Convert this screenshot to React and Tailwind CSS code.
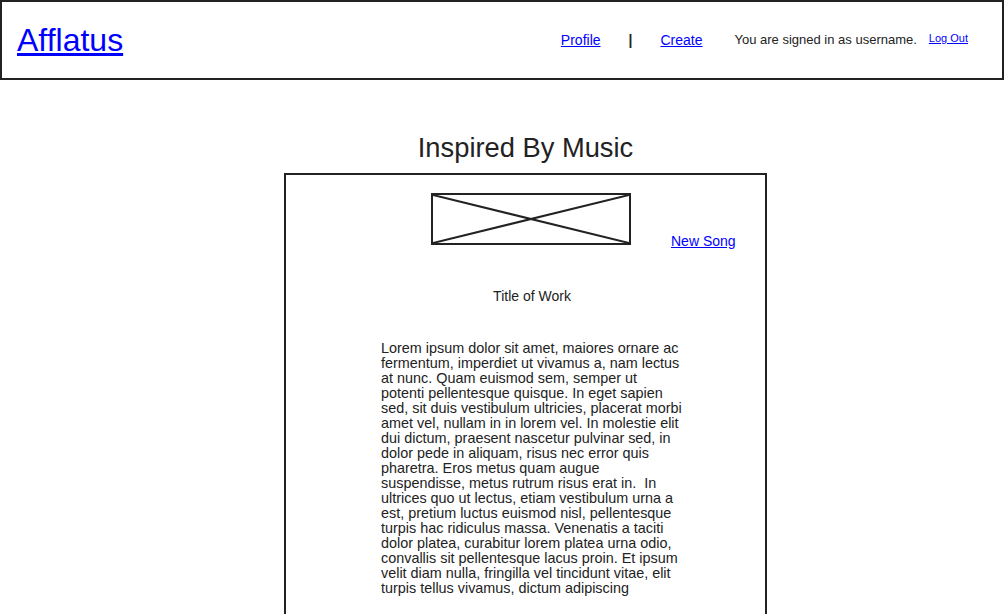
// Afflatus wireframe page
// Header with nav, then a centred card for the work

const Header = () => {
  return (
    <header className="h-[80px] border-2 border-[#222] flex items-center pl-[15px] pr-[34px]">
      <a href="#" className="text-[32px] leading-none text-[#0000ff] underline">
        Afflatus
      </a>
      <nav className="ml-auto flex items-center text-[#222]">
        <a href="#" className="text-[14px] text-[#0000ff] underline">Profile</a>
        <span className="ml-[28px] text-[14px] font-bold">|</span>
        <a href="#" className="ml-[28px] text-[14px] text-[#0000ff] underline">Create</a>
        <span className="ml-[32px] text-[13px]">You are signed in as username.</span>
        <a href="#" className="ml-[12px] mb-[4px] text-[11px] text-[#0000ff] underline">Log Out</a>
      </nav>
    </header>
  );
};

const Placeholder = () => {
  return (
    <div className="w-[200px] h-[52px] border-2 border-[#222]">
      <svg width="196" height="48" viewBox="0 0 196 48" className="block">
        <line x1="0" y1="0" x2="196" y2="48" stroke="#222" strokeWidth="2" />
        <line x1="0" y1="48" x2="196" y2="0" stroke="#222" strokeWidth="2" />
      </svg>
    </div>
  );
};

const lorem =
  'Lorem ipsum dolor sit amet, maiores ornare ac fermentum, imperdiet ut vivamus a, nam lectus at nunc. Quam euismod sem, semper ut potenti pellentesque quisque. In eget sapien sed, sit duis vestibulum ultricies, placerat morbi amet vel, nullam in in lorem vel. In molestie elit dui dictum, praesent nascetur pulvinar sed, in dolor pede in aliquam, risus nec error quis pharetra. Eros metus quam augue suspendisse, metus rutrum risus erat in.\u00a0 In ultrices quo ut lectus, etiam vestibulum urna a est, pretium luctus euismod nisl, pellentesque turpis hac ridiculus massa. Venenatis a taciti dolor platea, curabitur lorem platea urna odio, convallis sit pellentesque lacus proin. Et ipsum velit diam nulla, fringilla vel tincidunt vitae, elit turpis tellus vivamus, dictum adipiscing';

const App = () => {
  return (
    <div className="min-h-screen bg-white text-[#222] font-['Liberation_Sans',Arial,sans-serif]">
      <Header />
      <main className="flex flex-col items-center pl-[47px] pt-[52px]">
        <h1 className="text-[27.3px] leading-[31px]">Inspired By Music</h1>
        <section className="mt-[10px] w-[483px] h-[460px] border-2 border-[#222] pt-[18px]">
          <div className="flex items-end pl-[145px]">
            <Placeholder />
            <a href="#" className="ml-[40px] mb-[-7px] text-[14px] text-[#0000ff] underline">
              New Song
            </a>
          </div>
          <div className="pl-[95px] w-[397px]">
            <p className="mt-[43px] text-[14px] leading-[16px] text-center">Title of Work</p>
            <p className="mt-[37px] w-[302px] text-[14.4px] leading-[15px]">{lorem}</p>
          </div>
        </section>
      </main>
    </div>
  );
};

export default App;
